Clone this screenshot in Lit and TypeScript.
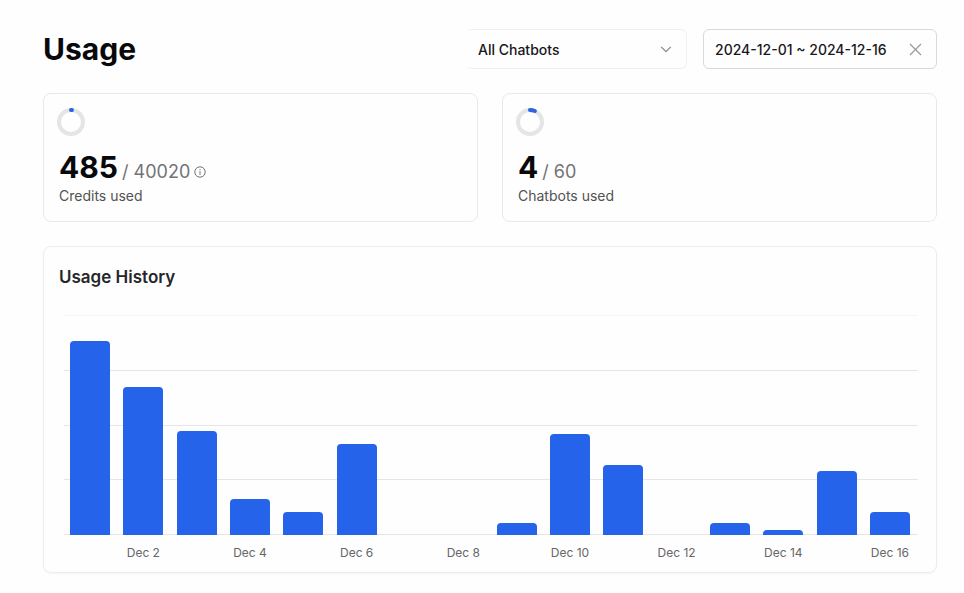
import { LitElement, html, css } from "lit";
import { customElement, property, state } from "lit/decorators.js";

const base = css`
  *,
  *::before,
  *::after {
    box-sizing: border-box;
  }
  h1,
  h2,
  p {
    margin: 0;
  }
`;

/** Small donut that shows the share of a quota. */
@customElement("quota-ring")
export class QuotaRing extends LitElement {
  @property({ type: Number }) share = 0;

  static styles = css`
    :host {
      display: block;
      width: 28px;
      height: 28px;
    }
    svg {
      display: block;
    }
    .track,
    .value {
      fill: none;
      stroke-width: 4;
    }
    .track {
      stroke: #e5e5e5;
    }
    .value {
      stroke: #2b63e0;
      stroke-linecap: round;
    }
  `;

  render() {
    return html`<svg width="28" height="28" viewBox="0 0 28 28" aria-hidden="true">
      <circle class="track" cx="14" cy="14" r="12"></circle>
      <circle
        class="value"
        cx="14"
        cy="14"
        r="12"
        pathLength="100"
        stroke-dasharray="${this.share} 100"
        transform="rotate(-90 14 14)"
      ></circle>
    </svg>`;
  }
}

/** Card with a ring, a used / total figure and a caption. */
@customElement("quota-card")
export class QuotaCard extends LitElement {
  @property({ type: Number }) used = 0;
  @property({ type: Number }) total = 1;
  @property() caption = "";
  @property() hint = "";

  static styles = [
    base,
    css`
      :host {
        display: block;
        padding: 14px 13px 15px;
        border: 1px solid #e9e9eb;
        border-radius: 8px;
        background: #fefefe;
      }
      .figure {
        display: flex;
        align-items: baseline;
        gap: 4px;
        margin: 17px 2px 0;
        line-height: 28px;
      }
      .used {
        font-size: 30px;
        font-weight: 700;
        color: #09090b;
      }
      .total {
        font-size: 18px;
        color: #737373;
      }
      .hint {
        display: flex;
        align-self: center;
        padding: 0;
        margin-top: 4px;
        border: 0;
        background: none;
        color: #737373;
      }
      .caption {
        margin: 0 2px;
        font-size: 14px;
        line-height: 20px;
        color: #525252;
      }
    `,
  ];

  render() {
    return html`
      <quota-ring .share=${(this.used / this.total) * 100}></quota-ring>
      <p class="figure">
        <span class="used">${this.used}</span>
        <span class="total">/ ${this.total}</span>
        ${this.hint
          ? html`<button class="hint" type="button" aria-label=${this.hint}>
              <svg width="12" height="12" viewBox="0 0 12 12" fill="none" stroke="currentColor">
                <circle cx="6" cy="6" r="5.2"></circle>
                <path d="M6 5.2V8.8"></path>
                <path d="M6 3.1V4.2"></path>
              </svg>
            </button>`
          : null}
      </p>
      <p class="caption">${this.caption}</p>
    `;
  }
}

/** Daily bars over evenly spaced rules; every second day is labelled. */
@customElement("usage-chart")
export class UsageChart extends LitElement {
  @property({ attribute: false }) values: number[] = [];
  @property({ type: Number }) max = 220;

  static styles = [
    base,
    css`
      :host {
        display: block;
      }
      .plot {
        position: relative;
        height: 220px;
      }
      .rules {
        position: absolute;
        inset: 0;
        display: flex;
        flex-direction: column;
      }
      .rule {
        flex: 1;
        border-top: 1px solid #e5e5e8;
      }
      .rule:first-child {
        border-top-color: #f5f5f5;
      }
      .rule:last-child {
        border-bottom: 1px solid #e5e5e8;
      }
      .row {
        display: flex;
        justify-content: space-between;
        padding: 0 8px 0 6px;
      }
      .bars {
        position: relative;
        height: 100%;
        align-items: flex-end;
      }
      .bar {
        width: 40px;
        border-radius: 4px 4px 0 0;
        background: #2563eb;
      }
      .days {
        margin-top: 10px;
      }
      .day {
        display: flex;
        justify-content: center;
        width: 40px;
        font-size: 12px;
        line-height: 16px;
        white-space: nowrap;
        color: #666666;
      }
    `,
  ];

  render() {
    return html`
      <div class="plot">
        <div class="rules">${[0, 1, 2, 3].map(() => html`<div class="rule"></div>`)}</div>
        <div class="row bars">
          ${this.values.map(
            (v) => html`<div class="bar" style="height:${(v / this.max) * 100}%"></div>`
          )}
        </div>
      </div>
      <div class="row days">
        ${this.values.map(
          (_, i) => html`<div class="day"><span>${i % 2 ? `Dec ${i + 1}` : ""}</span></div>`
        )}
      </div>
    `;
  }
}

@customElement("app-root")
export class AppRoot extends LitElement {
  @state() private range = "2024-12-01 ~ 2024-12-16";

  private history = [194, 148, 104, 36, 23, 91, 0, 0, 12, 101, 70, 0, 12, 5, 64, 23];

  static styles = [
    base,
    css`
      :host {
        display: block;
        box-sizing: border-box;
        min-height: 100vh;
        padding: 29px 27px 16px 43px;
        background: #fefefe;
        font-family: Inter, "Liberation Sans", sans-serif;
        color: #18181b;
      }
      .top {
        display: flex;
        align-items: center;
        gap: 16px;
      }
      h1 {
        flex: 1;
        font-size: 30px;
        font-weight: 700;
        line-height: 40px;
        color: #09090b;
      }
      .field {
        display: flex;
        align-items: center;
        height: 40px;
        border: 1px solid #d9d9dc;
        border-radius: 6px;
      }
      .picker {
        width: 221px;
        padding-right: 13px;
        border-color: #f0f0f1;
        border-left-color: transparent;
      }
      .range {
        width: 234px;
        padding-right: 13px;
      }
      select,
      input {
        flex: 1;
        min-width: 0;
        height: 100%;
        padding: 0 0 0 11px;
        border: 0;
        outline: 0;
        appearance: none;
        background: none;
        font: 500 14px Inter, "Liberation Sans", sans-serif;
        color: #18181b;
      }
      .clear {
        display: flex;
        padding: 0;
        border: 0;
        background: none;
      }
      .cards {
        display: grid;
        grid-template-columns: 1fr 1fr;
        gap: 24px;
        margin: 24px 0;
      }
      .history {
        padding: 16px 18px 11px 20px;
        border: 1px solid #ededef;
        border-radius: 8px;
        box-shadow: 0 1px 2px #0000000a;
      }
      h2 {
        margin: 0 -5px 24px;
        font-size: 17px;
        font-weight: 600;
        line-height: 28px;
        color: #27272a;
      }
    `,
  ];

  render() {
    return html`
      <header class="top">
        <h1>Usage</h1>
        <div class="field picker">
          <select aria-label="Chatbot">
            <option>All Chatbots</option>
          </select>
          <svg width="14" height="14" viewBox="0 0 14 14" fill="none" stroke="#858585" stroke-width="1.2" aria-hidden="true">
            <path d="M2.2 4.8L7 9.6L11.8 4.8"></path>
          </svg>
        </div>
        <div class="field range">
          <input type="text" aria-label="Date range" readonly .value=${this.range} />
          <button class="clear" type="button" aria-label="Clear dates" @click=${() => (this.range = "")}>
            <svg width="15" height="15" viewBox="0 0 15 15" fill="none" stroke="#999999" stroke-width="1.2">
              <path d="M2 2L13 13M13 2L2 13"></path>
            </svg>
          </button>
        </div>
      </header>
      <section class="cards">
        <quota-card .used=${485} .total=${40020} caption="Credits used" hint="About credits"></quota-card>
        <quota-card .used=${4} .total=${60} caption="Chatbots used"></quota-card>
      </section>
      <section class="history">
        <h2>Usage History</h2>
        <usage-chart .values=${this.history}></usage-chart>
      </section>
    `;
  }
}
